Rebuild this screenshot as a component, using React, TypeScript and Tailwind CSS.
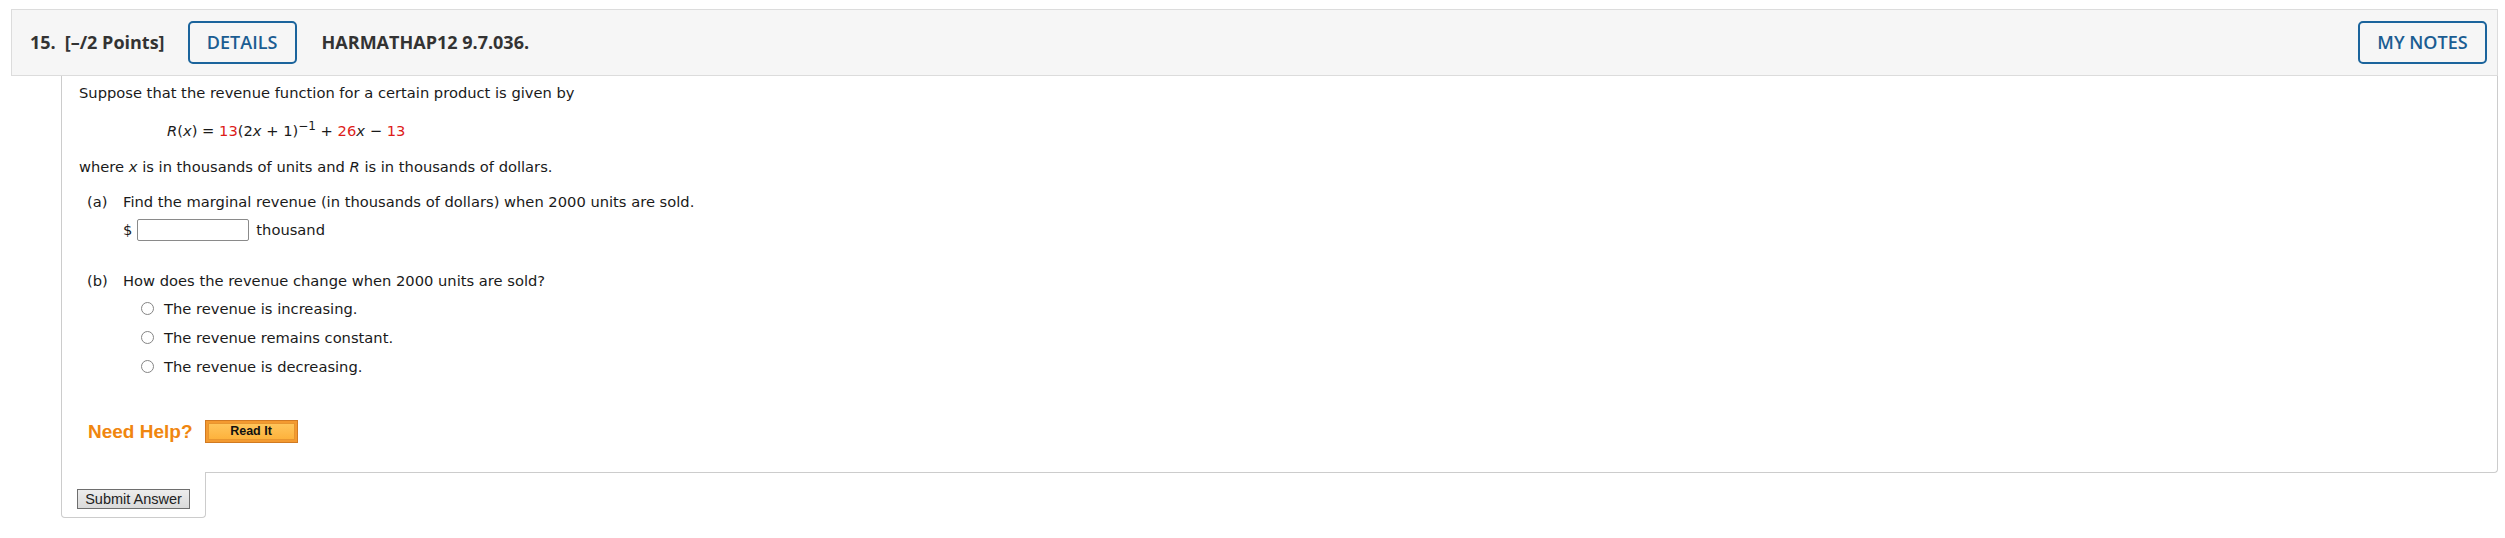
export default function App() {
  const options = [
    'The revenue is increasing.',
    'The revenue remains constant.',
    'The revenue is decreasing.',
  ]

  return (
    <div className="min-h-[538px] bg-white pt-[9px] pl-[11px] pr-[7px]">
      {/* Question header */}
      <div className="flex h-[67px] items-center border border-[#dcdcdc] bg-[#f6f6f6] pl-[18px] pr-[10px] font-['Open_Sans',sans-serif] text-[18px] text-[#333]">
        <span className="font-bold">15.</span>
        <span className="ml-[9px] font-bold">[–/2 Points]</span>
        <button className="ml-[23px] h-[43px] w-[109px] rounded-[5px] border-2 border-[#1b649c] font-semibold text-[#1b5d92]">
          DETAILS
        </button>
        <span className="ml-[25px] font-bold">HARMATHAP12 9.7.036.</span>
        <button className="ml-auto h-[43px] w-[129px] rounded-[5px] border-2 border-[#1b649c] font-semibold text-[#1b5d92]">
          MY NOTES
        </button>
      </div>

      <div className="ml-[50px]">
        {/* Question body */}
        <div className="rounded-br-[4px] border-x border-b border-[#cccccc] pt-[8px] pb-[29px] pl-[17px] font-['DejaVu_Sans',sans-serif] text-[14.7px] leading-[18px] text-[#1a1a1a]">
          <div>Suppose that the revenue function for a certain product is given by</div>

          <div className="mt-[20px] ml-[88px]">
            <i>R</i>(<i>x</i>) = <span className="text-[#dd1c1a]">13</span>(2<i>x</i> + 1)
            <sup className="text-[12px]">−1</sup> + <span className="text-[#dd1c1a]">26</span>
            <i>x</i> − <span className="text-[#dd1c1a]">13</span>
          </div>

          <div className="mt-[18px]">
            where <i>x</i> is in thousands of units and <i>R</i> is in thousands of dollars.
          </div>

          {/* Part a */}
          <div className="mt-[17px] ml-[8px] flex">
            <span className="w-[36px] shrink-0">(a)</span>
            <div>
              <div>Find the marginal revenue (in thousands of dollars) when 2000 units are sold.</div>
              <div className="mt-[8px] flex h-[22px] items-center">
                <span>$</span>
                <input
                  type="text"
                  readOnly
                  className="ml-[5px] h-[22px] w-[112px] rounded-[2px] border border-[#8a8a8a] bg-white"
                />
                <span className="ml-[7px]">thousand</span>
              </div>
            </div>
          </div>

          {/* Part b */}
          <div className="mt-[31px] ml-[8px] flex">
            <span className="w-[36px] shrink-0">(b)</span>
            <div>
              <div>How does the revenue change when 2000 units are sold?</div>
              <div className="mt-[4px] ml-[18px]">
                {options.map((o) => (
                  <label key={o} className="flex h-[29px] items-center">
                    <span className="h-[13px] w-[13px] rounded-full border border-[#858585] bg-white" />
                    <span className="ml-[10px]">{o}</span>
                  </label>
                ))}
              </div>
            </div>
          </div>

          {/* Help */}
          <div className="mt-[39px] ml-[9px] flex h-[23px] items-center font-['Liberation_Sans',Arial,sans-serif]">
            <span className="text-[19px] font-bold text-[#f0860f]">Need Help?</span>
            <button className="ml-[12px] h-[23px] w-[93px] border border-[#d17a22] bg-[#f39a30] p-[2px]">
              <span className="flex h-full w-full items-center justify-center border border-[#e8952f] bg-gradient-to-b from-[#ffc55a] to-[#fdb23c] text-[12.5px] font-bold leading-none text-[#111]">
                Read It
              </span>
            </button>
          </div>
        </div>

        {/* Submit tab */}
        <div className="-mt-px h-[46px] w-[145px] rounded-b-[4px] border-x border-b border-[#cccccc] bg-white pt-[14px] pl-[15px]">
          <button className="h-[20px] w-[113px] border border-[#6e6e6e] bg-gradient-to-b from-[#ededed] to-[#dadada] font-['Liberation_Sans',Arial,sans-serif] text-[14.5px] leading-none text-[#222]">
            Submit Answer
          </button>
        </div>
      </div>
    </div>
  )
}
